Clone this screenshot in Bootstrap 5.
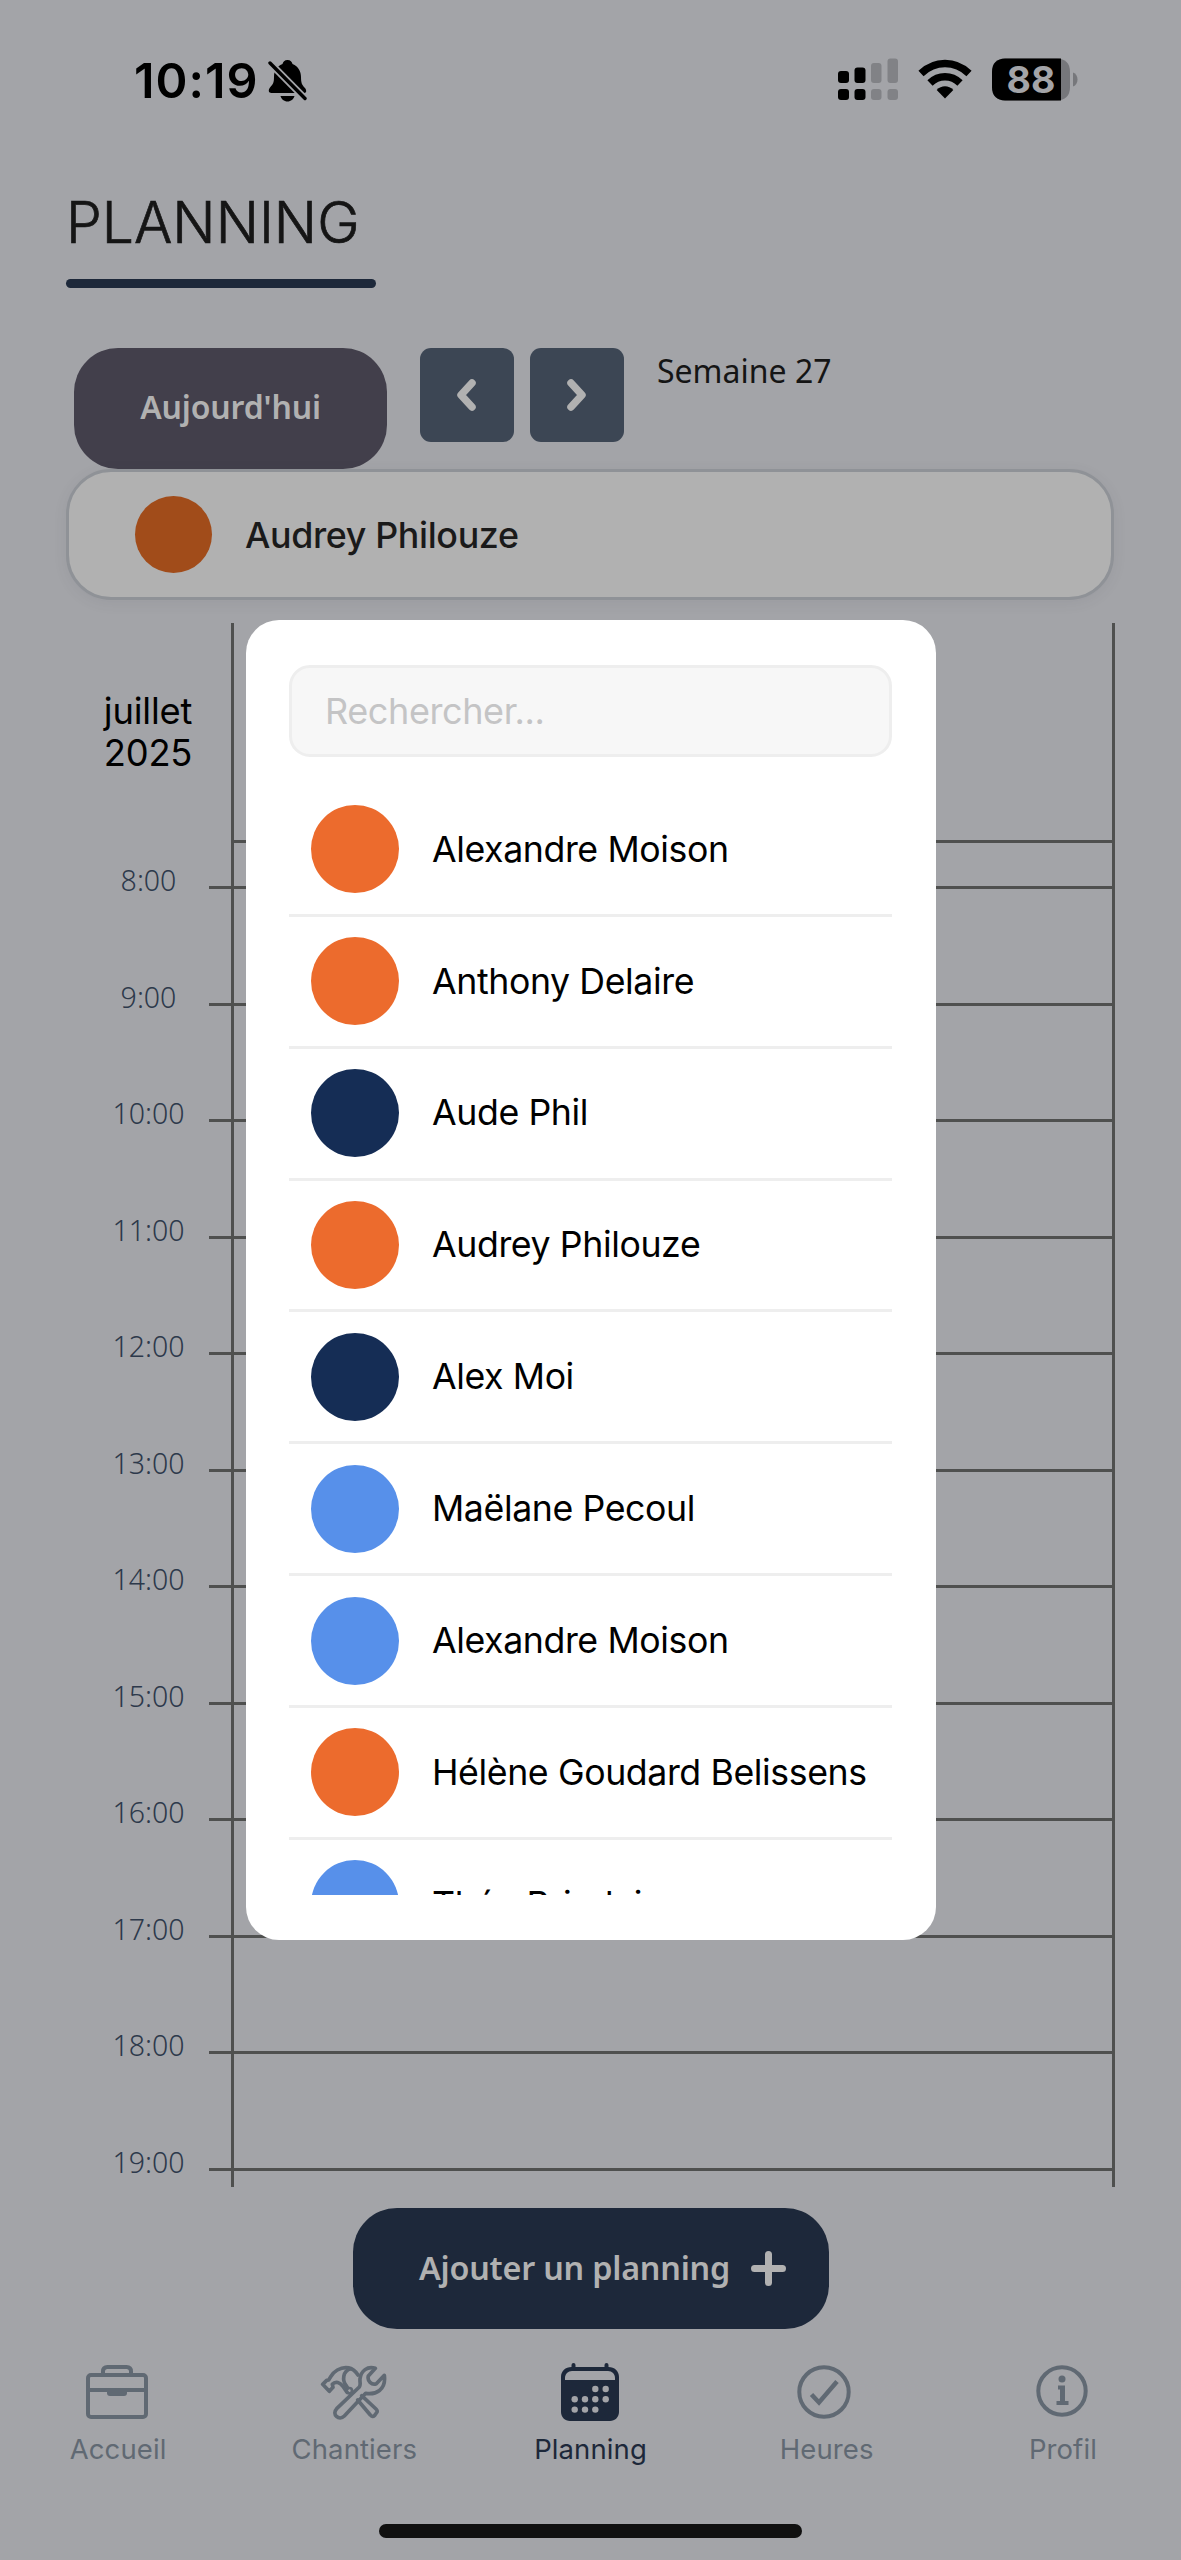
<!DOCTYPE html>
<html lang="fr">
<head>
<meta charset="utf-8">
<meta name="viewport" content="width=device-width, initial-scale=1">
<title>Planning</title>
<link href="https://cdn.jsdelivr.net/npm/bootstrap@5.3.0/dist/css/bootstrap.min.css" rel="stylesheet">
<style>
:root{--bg:#a3a4a8;--navy:#1d283a;--ink:#151515;--rule:#4f504f;--muted:#606973}
html,body{height:2560px;overflow:hidden}
body{background:var(--bg);color:#000;font-family:Inter,"Liberation Sans",sans-serif;width:1181px}
.screen{height:2560px}
.statusbar{height:192px;padding:56px 103px 0 134px}
.clock{font-size:48.5px;font-weight:600;line-height:50px;letter-spacing:1px;width:134px}
.bell{margin-top:3px}
.signal{margin:2px 20px 0 0}
.wifi{margin:3px 20px 0 0}
.battery{margin-top:2px}
.title-block{height:156px;padding-left:66px}
.page-title{font-size:57px;font-weight:300;line-height:60px;color:var(--ink);letter-spacing:0;margin:0;padding-top:1px;-webkit-text-stroke:.7px var(--ink)}
.title-rule{width:310px;height:9px;border-radius:5px;background:var(--navy);margin-top:26px}
.toolbar{height:121px;padding-left:74px}
.round-btn,.round-btn:hover{border:0;border-radius:44px;color:#b1b1b1;font:600 32px/44px "Noto Sans",sans-serif;height:121px;padding:0 0 3px}
.today{width:313px;background:#423f4b!important;letter-spacing:-.15px;margin-right:33px}
.step{width:94px;height:94px;border-radius:11px;background:#3c4654!important;border:0;padding:0;margin-right:16px}
.week{font:400 32px/44px "Noto Sans",sans-serif;color:var(--ink);margin-left:17px;margin-top:1px}
.person-card{width:1048px;height:131px;margin-left:66px;border:3px solid #8f9297;border-radius:45px;background:#b1b1b1;padding-left:66px;box-shadow:0 3px 14px rgba(60,65,80,.08)}
.person-card .dot{width:77px;height:77px;background:#a14c1a;margin-right:33px}
.person-card .who{font-size:35.8px;font-weight:500;letter-spacing:-.35px;color:#1a1a1a;padding-top:2px}
.dot{border-radius:50%;flex:none}
.agenda{margin-top:22.5px;height:1564px;background:linear-gradient(var(--rule),var(--rule)) 231px 0/3px 100% no-repeat,linear-gradient(var(--rule),var(--rule)) 1112px 0/3px 100% no-repeat}
.all-day{height:220px;padding-right:67px}
.month{width:231px;padding:67px 0 0 65px;font-size:36.3px;line-height:42px;letter-spacing:-.2px}
.all-day .line{border-bottom:3px solid var(--rule)}
.hour{height:116.5px;padding-right:67px}
.hour.first{height:46.5px}
.hour .stamp{width:209px;padding-left:88px;font:300 28.5px/30px "Noto Sans",sans-serif;color:#2d394b;margin-bottom:-6px}
.hour .line{height:3px;background:var(--rule)}
.add{width:476px;background:var(--navy)!important;font-size:32.3px;letter-spacing:-.2px;padding-left:24px;margin-top:21.5px}
.add svg{margin:3px 0 0 21px}
.tabs{height:160px;padding-top:14px}
.tabs .nav-link{padding:0;color:var(--muted);font-size:27.5px;line-height:34px;letter-spacing:.1px}
.tabs .nav-link.active{color:var(--navy)}
.tab-pic{height:66px;margin-bottom:7px;padding-right:2px}
.home-bar{width:423px;height:14px;border-radius:7px;background:#101010;margin-top:19px}
.picker{position:absolute;left:245.5px;top:620px;width:690px;height:1320px;background:#fff;border-radius:33px;padding:45px 43.5px}
.search-box,.search-box:focus{height:92px;border:3px solid #eee;border-radius:21px;background:#f7f7f7;font-size:36px;letter-spacing:-.4px;padding:0 32px 0 33px}
.search-box::placeholder{color:#c4c4c5;opacity:1}
.people{margin-top:28px;height:1110px;overflow:hidden}
.people .list-group-item{height:131.86px;border:0;border-bottom:3px solid #eee;border-radius:0;padding:0 0 0 22px;background:none;flex:none;color:#000;font-size:35.7px;letter-spacing:-.4px;white-space:nowrap}
.people .dot{width:88px;height:88px;margin-right:33px}
.orange{background:#ec6b2d}.marine{background:#152d55}.azure{background:#5790ea}
</style>
<script src="https://cdn.jsdelivr.net/npm/bootstrap@5.3.0/dist/js/bootstrap.bundle.min.js"></script>
</head>
<body>
<div class="screen d-flex flex-column position-relative">
  <header class="statusbar d-flex align-items-start">
    <span class="clock">10:19</span>
    <svg class="bell" width="39" height="43" viewBox="0 0 39 43"><path d="M19.500 1c3 0 4.500 1.800 5 4 6 2.500 8.500 7.500 8.500 13 0 6 1 8 4 11 2 3 1.500 5-1.500 5H3.500C.5 34 0 31 2 28.500 5 25 6 24 6 18c0-6 2.500-10.500 8.500-13 .5-2.200 2-4 5-4zM12.500 37h14c-1 3.200-3.500 5.500-7 5.500s-6-2.300-7-5.500z"/><path d="M2 4 37 39.500" stroke="#a3a4a8" stroke-width="7"/><path d="M2 4 37 39.500" stroke="#000" stroke-width="3.400" stroke-linecap="round"/></svg>
    <div class="d-flex ms-auto">
      <svg class="signal" width="60" height="43" viewBox="0 0 60 43"><g><rect x="0" y="13" width="11" height="12" rx="3"/><rect x="16.500" y="9.500" width="11" height="15.500" rx="3"/><rect x="0" y="31" width="11" height="11" rx="3"/><rect x="16.500" y="31" width="11" height="11" rx="3"/></g><g fill="#818286"><rect x="33" y="5" width="10.500" height="20" rx="3"/><rect x="49.500" y=".5" width="10.500" height="24.500" rx="3"/><rect x="33" y="31" width="10.500" height="11" rx="3"/><rect x="49.500" y="31" width="10.500" height="11" rx="3"/></g></svg>
      <svg class="wifi" width="54" height="40" viewBox="0 0 54 40"><g fill="none" stroke="#000" stroke-width="7.500"><path d="M3 14.500C17 1.300 37 1.300 51 14.500"/><path d="M12 24c8.500-8.300 21.500-8.300 30 0"/></g><path d="M27 39.500 18.700 31c4.500-5 12.100-5 16.600 0z"/></svg>
      <svg class="battery" width="86" height="43" viewBox="0 0 86 43"><path d="M13 .5h52c8 0 13 5 13 13v16c0 8-5 13-13 13H13c-8 0-13-5-13-13v-16C0 5.500 5 .5 13 .5z" fill="#76777b"/><path d="M13 .5h56v42H13c-8 0-13-5-13-13v-16C0 5.500 5 .5 13 .5z"/><path d="M81 14.500c6 2 6 12 0 14z" fill="#76777b"/><text x="39" y="35" text-anchor="middle" font-family="Inter" font-weight="700" font-size="37.500" fill="#a3a4a8">88</text></svg>
    </div>
  </header>

  <section class="title-block">
    <h1 class="page-title">PLANNING</h1>
    <div class="title-rule"></div>
  </section>

  <section class="toolbar d-flex align-items-start">
    <button class="btn round-btn today">Aujourd'hui</button>
    <button class="btn step d-flex align-items-center justify-content-center" aria-label="Semaine précédente"><svg width="24" height="36" viewBox="0 0 24 36"><path d="M17 6 6 18l11 12" fill="none" stroke="#b1b1b1" stroke-width="7.500" stroke-linecap="round" stroke-linejoin="round"/></svg></button>
    <button class="btn step d-flex align-items-center justify-content-center" aria-label="Semaine suivante"><svg width="24" height="36" viewBox="0 0 24 36"><path d="m6 6 11 12L6 30" fill="none" stroke="#b1b1b1" stroke-width="7.500" stroke-linecap="round" stroke-linejoin="round"/></svg></button>
    <span class="week">Semaine 27</span>
  </section>

  <section class="person-card d-flex align-items-center"><span class="dot"></span><span class="who">Audrey Philouze</span></section>

  <section class="agenda">
    <div class="all-day d-flex"><div class="month text-center">juillet<br>2025</div><div class="line flex-grow-1"></div></div>
    <div class="hour first d-flex align-items-end"><span class="stamp text-center">8:00</span><span class="line flex-grow-1"></span></div>
    <div class="hour d-flex align-items-end"><span class="stamp text-center">9:00</span><span class="line flex-grow-1"></span></div>
    <div class="hour d-flex align-items-end"><span class="stamp text-center">10:00</span><span class="line flex-grow-1"></span></div>
    <div class="hour d-flex align-items-end"><span class="stamp text-center">11:00</span><span class="line flex-grow-1"></span></div>
    <div class="hour d-flex align-items-end"><span class="stamp text-center">12:00</span><span class="line flex-grow-1"></span></div>
    <div class="hour d-flex align-items-end"><span class="stamp text-center">13:00</span><span class="line flex-grow-1"></span></div>
    <div class="hour d-flex align-items-end"><span class="stamp text-center">14:00</span><span class="line flex-grow-1"></span></div>
    <div class="hour d-flex align-items-end"><span class="stamp text-center">15:00</span><span class="line flex-grow-1"></span></div>
    <div class="hour d-flex align-items-end"><span class="stamp text-center">16:00</span><span class="line flex-grow-1"></span></div>
    <div class="hour d-flex align-items-end"><span class="stamp text-center">17:00</span><span class="line flex-grow-1"></span></div>
    <div class="hour d-flex align-items-end"><span class="stamp text-center">18:00</span><span class="line flex-grow-1"></span></div>
    <div class="hour d-flex align-items-end"><span class="stamp text-center">19:00</span><span class="line flex-grow-1"></span></div>
  </section>

  <button class="btn round-btn add d-flex align-items-center justify-content-center mx-auto flex-shrink-0">Ajouter un planning<svg width="35" height="35" viewBox="0 0 35 35"><path d="M17.500 3.500v28M3.500 17.500h28" stroke="#b1b1b1" stroke-width="7" stroke-linecap="round"/></svg></button>

  <nav class="tabs nav flex-nowrap mt-3">
    <a class="nav-link flex-fill w-100 d-flex flex-column align-items-center"><span class="tab-pic d-flex align-items-center"><svg width="62" height="54" viewBox="0 0 62 54"><g fill="none" stroke="#606973" stroke-width="4"><rect x="2" y="10" width="58" height="42" rx="3"/><path d="M17 10V6.500C17 3.500 18.500 2 21.500 2h19C43.500 2 45 3.500 45 6.500V10M2 25h58"/></g><path d="M21 25h20v3q0 3-3 3H24q-3 0-3-3z" fill="#606973"/></svg></span>Accueil</a>
    <a class="nav-link flex-fill w-100 d-flex flex-column align-items-center"><span class="tab-pic d-flex align-items-center"><svg width="67" height="55" viewBox="60 45 201 165"><g fill="none" stroke="#606973" stroke-width="11" stroke-linejoin="round" stroke-linecap="round"><path d="M226 55c-24-8-43 8-46 31-1 13 3 18-2 25l-68 65c-16 17 7 38 23 22l64-68c30 5 62-10 56-54l-24 25c-14 5-28-8-24-23z"/><path d="M174 75c-15-24-39-28-62-15-14 8-17 16-23 25l-3 5-6 1-12 12 20 21 11-12-2-9c10-11 23-5 31 5l13 19"/><path d="M152 56c-25 7-25 36-14 50l5 8"/><path d="m173 150 38 45q6 8 13 1l5-7q6-5-1-12l-43-40"/></g><circle cx="148" cy="122" r="8" fill="none" stroke="#606973" stroke-width="8"/></svg></span>Chantiers</a>
    <a class="nav-link active flex-fill w-100 d-flex flex-column align-items-center"><span class="tab-pic d-flex align-items-center"><svg width="58" height="58" viewBox="0 0 58 58"><path d="M10.500 4V2a2 2 0 0 1 4 0v2h29V2a2 2 0 0 1 4 0v2c6 0 10.500 4 10.500 10v35c0 5-4 9-9 9H9c-5 0-9-4-9-9V14C0 8 4.500 4 10.500 4z" fill="#1d283a"/><g fill="#a3a4a8"><path d="M4 17v-2c0-4 3-7 7-7h36c4 0 7 3 7 7v2z"/><circle cx="34.300" cy="26" r="3.200"/><circle cx="44.700" cy="26" r="3.200"/><circle cx="13.700" cy="36.300" r="3.200"/><circle cx="24" cy="36.300" r="3.200"/><circle cx="34.300" cy="36.300" r="3.200"/><circle cx="44.700" cy="36.300" r="3.200"/><circle cx="13.700" cy="46.600" r="3.200"/><circle cx="24" cy="46.600" r="3.200"/><circle cx="34.300" cy="46.600" r="3.200"/></g></svg></span>Planning</a>
    <a class="nav-link flex-fill w-100 d-flex flex-column align-items-center"><span class="tab-pic d-flex align-items-center"><svg width="58" height="54" viewBox="0 0 58 54"><g fill="none" stroke="#606973" stroke-width="4"><circle cx="27" cy="27" r="24.700"/><path d="M14.500 29.500 22 37.500 40 16.500" stroke-width="4.500"/></g></svg></span>Heures</a>
    <a class="nav-link flex-fill w-100 d-flex flex-column align-items-center"><span class="tab-pic d-flex align-items-center"><svg width="54" height="54" viewBox="0 0 54 54"><circle cx="27" cy="26" r="23.700" fill="none" stroke="#606973" stroke-width="4"/><circle cx="27" cy="14" r="3.500" fill="#606973"/><path d="M23 20.500h7V36h3.500v4h-12v-4H25V24.500h-2z" fill="#606973"/></svg></span>Profil</a>
  </nav>
  <div class="home-bar mx-auto flex-shrink-0"></div>

  <div class="picker">
    <input class="form-control search-box" type="text" placeholder="Rechercher...">
    <div class="people list-group d-flex flex-column">
      <div class="list-group-item d-flex align-items-center"><span class="dot orange"></span>Alexandre Moison</div>
      <div class="list-group-item d-flex align-items-center"><span class="dot orange"></span>Anthony Delaire</div>
      <div class="list-group-item d-flex align-items-center"><span class="dot marine"></span>Aude Phil</div>
      <div class="list-group-item d-flex align-items-center"><span class="dot orange"></span>Audrey Philouze</div>
      <div class="list-group-item d-flex align-items-center"><span class="dot marine"></span>Alex Moi</div>
      <div class="list-group-item d-flex align-items-center"><span class="dot azure"></span>Maëlane Pecoul</div>
      <div class="list-group-item d-flex align-items-center"><span class="dot azure"></span>Alexandre Moison</div>
      <div class="list-group-item d-flex align-items-center"><span class="dot orange"></span>Hélène Goudard Belissens</div>
      <div class="list-group-item d-flex align-items-center"><span class="dot azure"></span>Théo Brindejonc</div>
    </div>
  </div>
</div>
</body>
</html>
